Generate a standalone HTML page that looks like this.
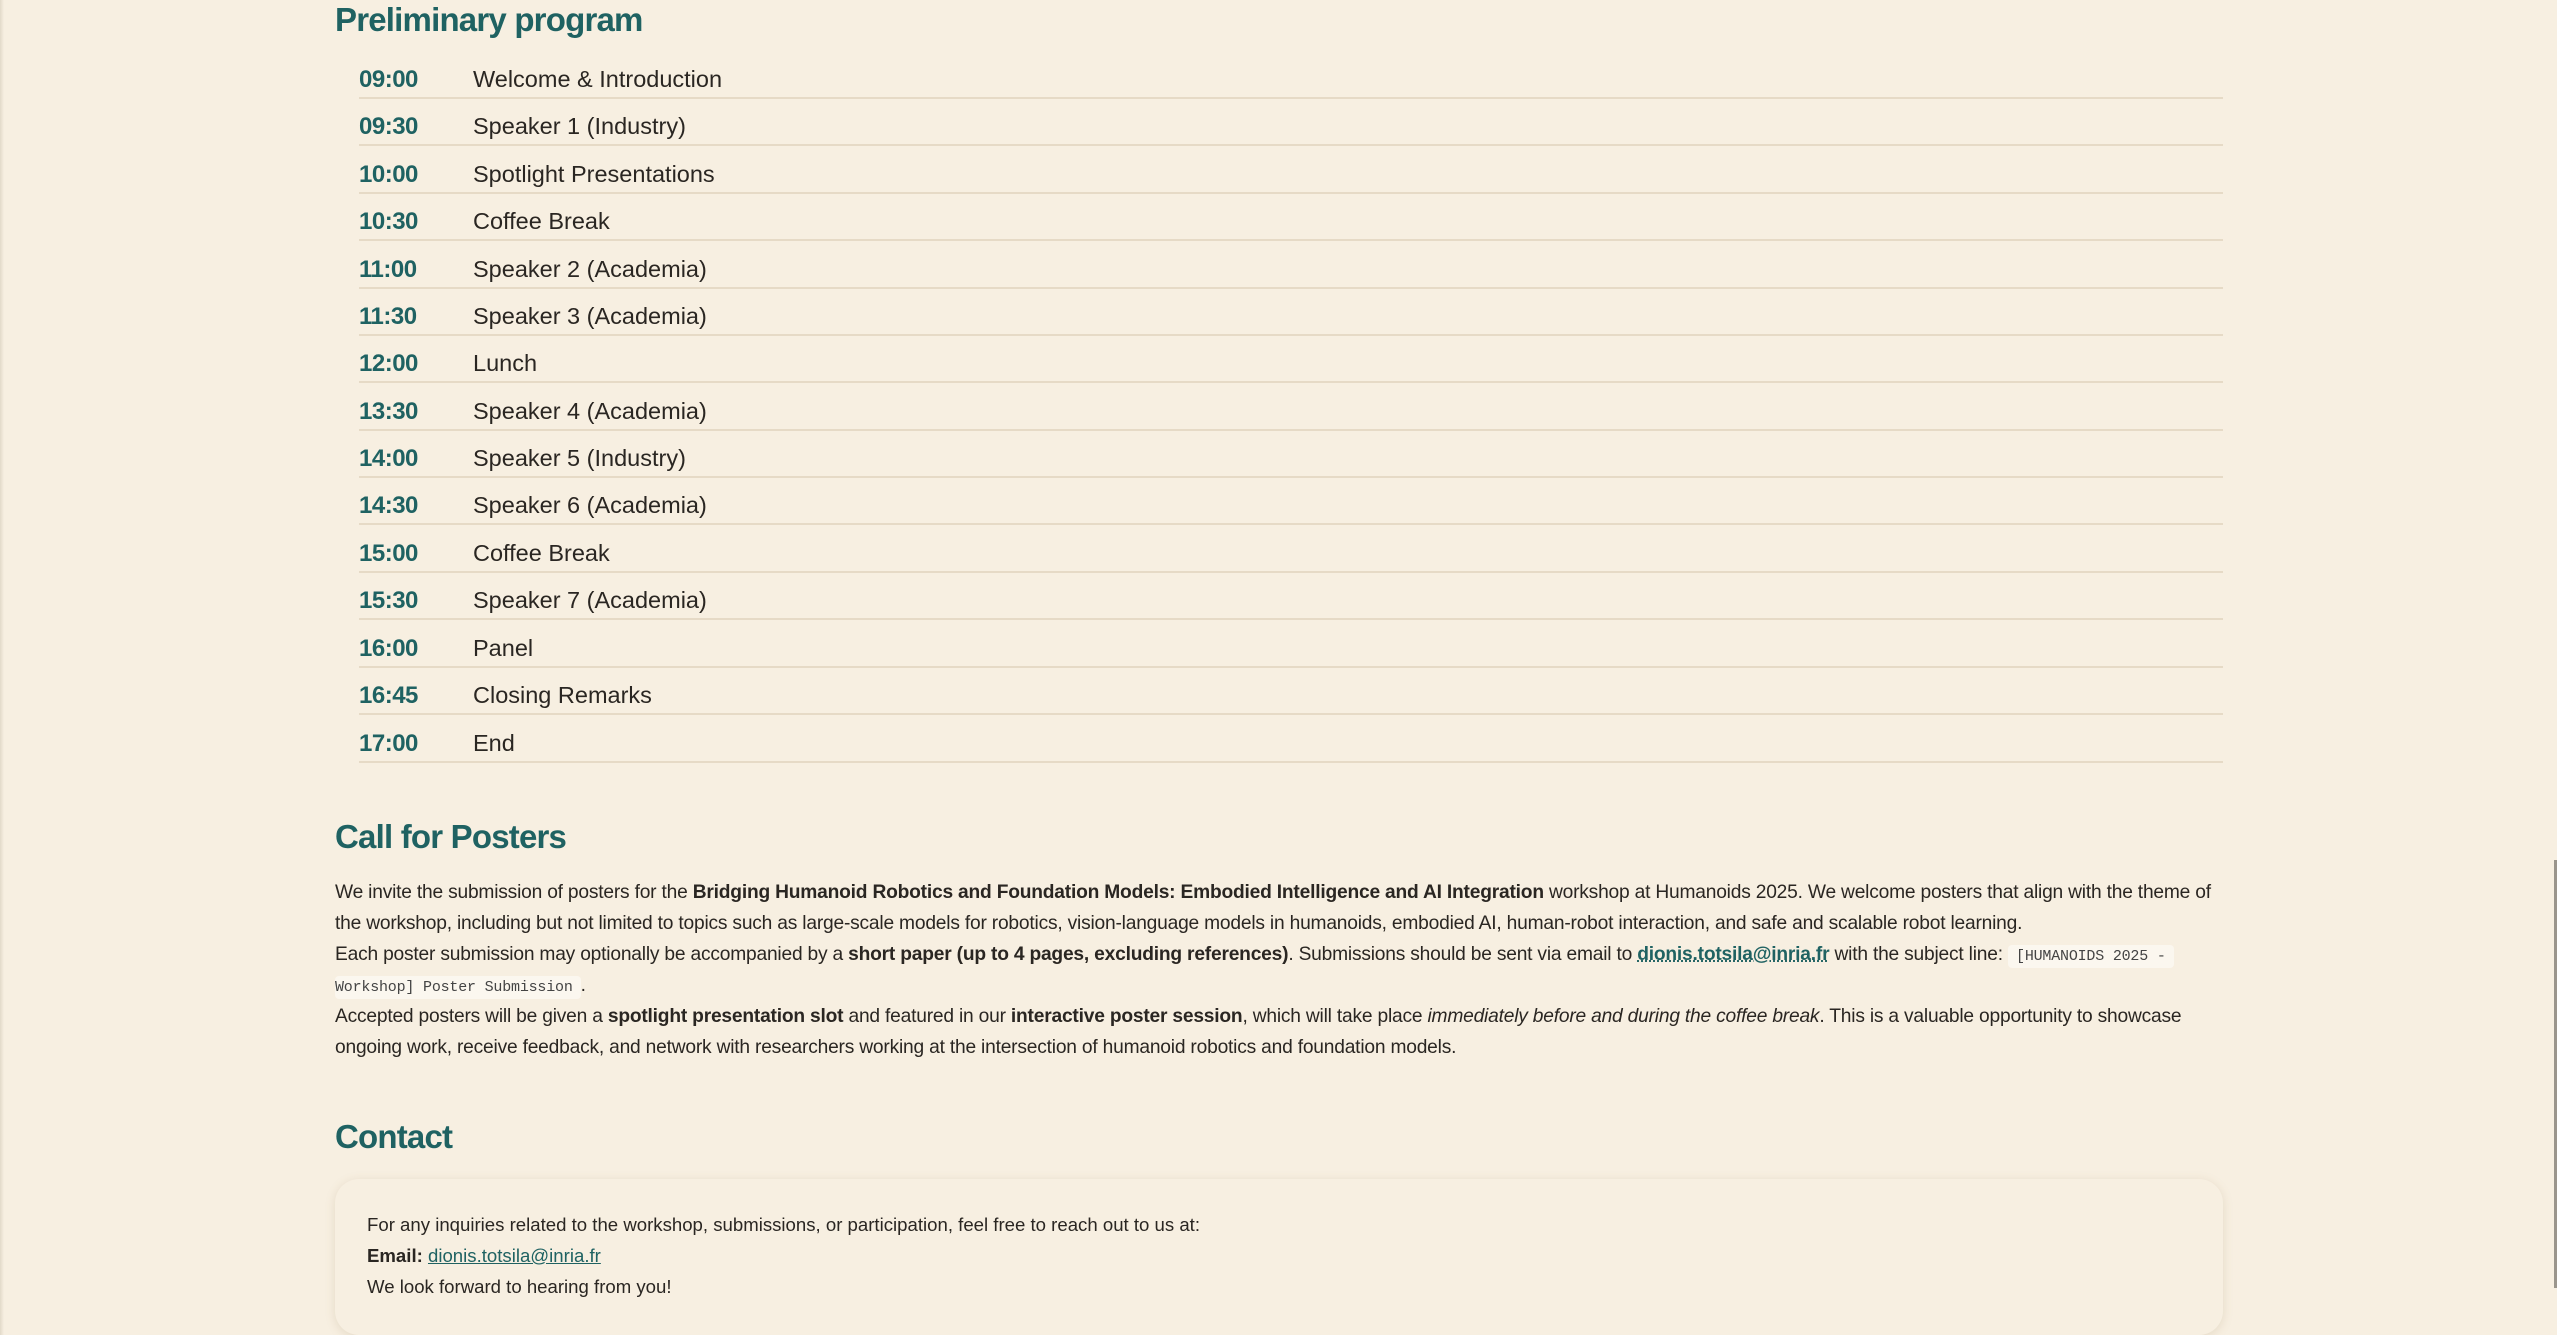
<!DOCTYPE html>
<html><head><meta charset="utf-8"><style>
html,body{margin:0;padding:0;}
body{width:2557px;height:1335px;overflow:hidden;background:#f7efe1;font-family:"Liberation Sans",sans-serif;color:#2a2622;position:relative;}
.edge{position:absolute;left:0;top:0;width:4px;height:1335px;background:linear-gradient(90deg,#e2d9c9,#f7efe1);}
.sb{position:absolute;left:2554px;top:860px;width:3px;height:428px;background:#9a958c;}
h2{position:absolute;left:335px;margin:0;font-size:33px;font-weight:bold;color:#1f6262;letter-spacing:-0.8px;line-height:40px;}
.row{position:absolute;left:359px;width:1864px;height:47px;border-bottom:2px solid #e6dac6;box-sizing:border-box;}
.row .t{position:absolute;left:0;top:14px;font-size:24px;font-weight:bold;color:#1f6262;letter-spacing:-0.5px;}
.row .d{position:absolute;left:114px;top:14px;font-size:23.5px;color:#2a2622;}
.p{position:absolute;left:335px;top:877px;font-size:19.2px;line-height:31px;white-space:nowrap;letter-spacing:-0.2px;}
.p b{font-weight:bold;}
a{color:#1f6262;font-weight:bold;text-decoration:underline dotted;}
code{font-family:"Liberation Mono",monospace;font-size:15px;line-height:1;background:#fbf7ef;padding:3px 8px;border-radius:4px;color:#444;}
.card{position:absolute;left:335px;top:1179px;width:1888px;height:156px;border-radius:24px;background:#f7efe1;box-shadow:0 2px 10px rgba(150,120,80,0.18);}
.card .c{position:absolute;left:32px;top:30px;font-size:18.6px;line-height:31px;white-space:nowrap;}
.card a{font-weight:normal;text-decoration:underline solid;}
</style></head><body>
<div class="edge"></div><div class="sb"></div>
<h2 style="top:0px">Preliminary program</h2>
<div class="row" style="top:52px"><span class="t">09:00</span><span class="d">Welcome &amp; Introduction</span></div>
<div class="row" style="top:99px"><span class="t">09:30</span><span class="d">Speaker 1 (Industry)</span></div>
<div class="row" style="top:147px"><span class="t">10:00</span><span class="d">Spotlight Presentations</span></div>
<div class="row" style="top:194px"><span class="t">10:30</span><span class="d">Coffee Break</span></div>
<div class="row" style="top:242px"><span class="t">11:00</span><span class="d">Speaker 2 (Academia)</span></div>
<div class="row" style="top:289px"><span class="t">11:30</span><span class="d">Speaker 3 (Academia)</span></div>
<div class="row" style="top:336px"><span class="t">12:00</span><span class="d">Lunch</span></div>
<div class="row" style="top:384px"><span class="t">13:30</span><span class="d">Speaker 4 (Academia)</span></div>
<div class="row" style="top:431px"><span class="t">14:00</span><span class="d">Speaker 5 (Industry)</span></div>
<div class="row" style="top:478px"><span class="t">14:30</span><span class="d">Speaker 6 (Academia)</span></div>
<div class="row" style="top:526px"><span class="t">15:00</span><span class="d">Coffee Break</span></div>
<div class="row" style="top:573px"><span class="t">15:30</span><span class="d">Speaker 7 (Academia)</span></div>
<div class="row" style="top:621px"><span class="t">16:00</span><span class="d">Panel</span></div>
<div class="row" style="top:668px"><span class="t">16:45</span><span class="d">Closing Remarks</span></div>
<div class="row" style="top:716px"><span class="t">17:00</span><span class="d">End</span></div>

<h2 style="top:817px">Call for Posters</h2>
<div class="p">We invite the submission of posters for the <b>Bridging Humanoid Robotics and Foundation Models: Embodied Intelligence and AI Integration</b> workshop at Humanoids 2025. We welcome posters that align with the theme of<br>the workshop, including but not limited to topics such as large-scale models for robotics, vision-language models in humanoids, embodied AI, human-robot interaction, and safe and scalable robot learning.<br>Each poster submission may optionally be accompanied by a <b>short paper (up to 4 pages, excluding references)</b>. Submissions should be sent via email to <a>dionis.totsila@inria.fr</a> with the subject line: <code>[HUMANOIDS 2025 -</code><br><code style="padding-left:0">Workshop] Poster Submission</code>.<br>Accepted posters will be given a <b>spotlight presentation slot</b> and featured in our <b>interactive poster session</b>, which will take place <i>immediately before and during the coffee break</i>. This is a valuable opportunity to showcase<br>ongoing work, receive feedback, and network with researchers working at the intersection of humanoid robotics and foundation models.</div>

<h2 style="top:1117px">Contact</h2>
<div class="card"><div class="c">For any inquiries related to the workshop, submissions, or participation, feel free to reach out to us at:<br><b>Email:</b> <a>dionis.totsila@inria.fr</a><br>We look forward to hearing from you!</div></div>
</body></html>
